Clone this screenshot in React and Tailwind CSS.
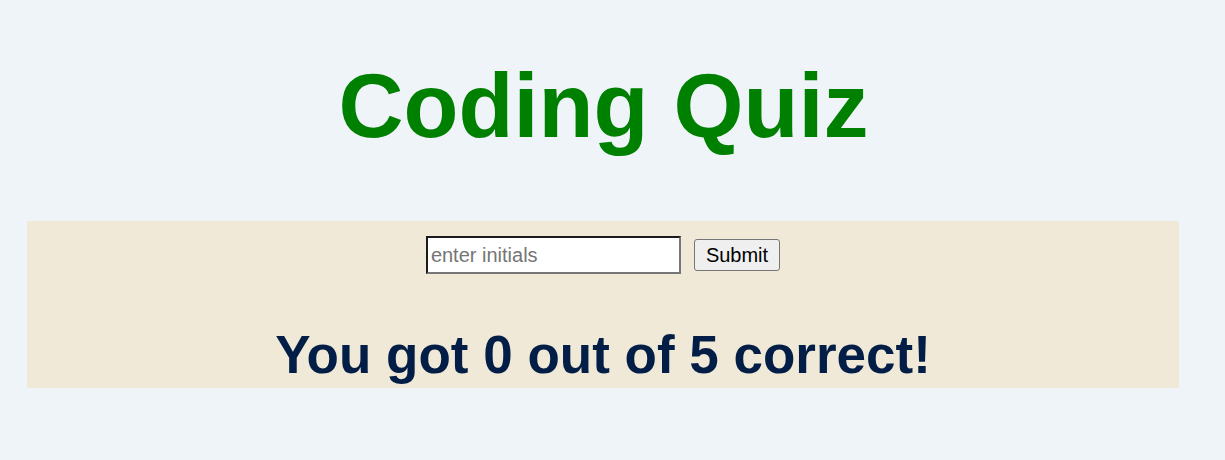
import React, { useState } from 'react';

export default function App() {
  const [initials, setInitials] = useState('');

  return (
    <div className="min-h-screen bg-[#eff4f9] font-['Liberation_Sans',Arial,sans-serif] overflow-hidden">
      <h1 className="mt-[61px] text-center text-[90px] leading-none font-bold text-[#008000] pr-[18px]">
        Coding Quiz
      </h1>

      <div className="mt-[70px] ml-[27px] w-[1152px] h-[167px] bg-[#f0e9d8] flex flex-col items-center">
        <div className="mt-[15px] flex items-center gap-[13px]">
          <input
            type="text"
            className="w-[255px] h-[38px] px-[3px] bg-white text-[20px] text-black border-2 border-t-[#1b1b1b] border-l-[#1b1b1b] border-b-[#767676] border-r-[#767676] placeholder:text-[#757575] outline-none"
            placeholder="enter initials"
            value={initials}
            onChange={(e) => setInitials(e.target.value)}
          />
          <button className="h-[32px] px-[11px] bg-[#efefef] text-[20px] text-black border border-[#767676] rounded-[3px]">
            Submit
          </button>
        </div>
        <h2 className="mt-[54px] text-[53px] leading-none font-bold text-[#021e46] whitespace-nowrap">
          You got 0 out of 5 correct!
        </h2>
      </div>
    </div>
  );
}
